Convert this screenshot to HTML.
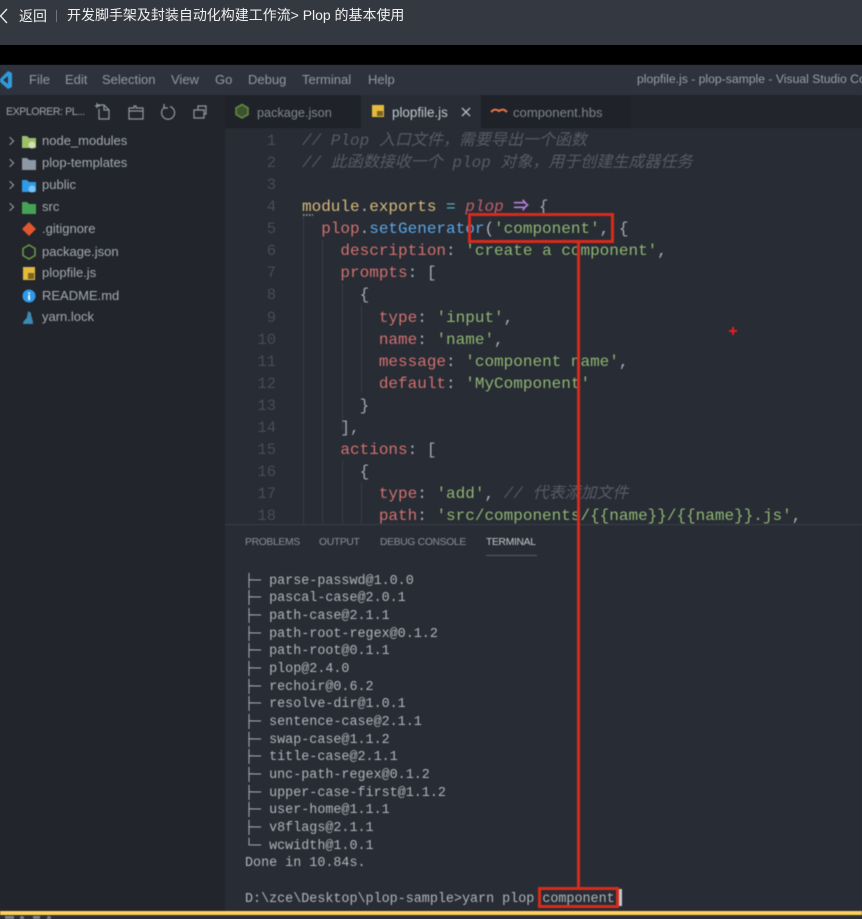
<!DOCTYPE html>
<html><head><meta charset="utf-8">
<style>
*{box-sizing:border-box}
html,body{margin:0;padding:0}
body{width:862px;height:919px;overflow:hidden;position:relative;background:#282c34;font-family:"Liberation Sans","Noto Sans CJK SC",sans-serif}
.a{position:absolute}
.t{position:absolute;white-space:pre;line-height:18px}
.m{color:#9299a3;font-size:13px;top:71px}
.f{color:#a4a9b1;font-size:13px;left:42px}
.ar{position:absolute;left:7px;width:6px;height:6px;border-top:1.3px solid #9aa0a8;border-right:1.3px solid #9aa0a8;transform:rotate(45deg)}
.code{position:absolute;font-family:"Liberation Mono","Noto Sans CJK SC",monospace;font-size:16px;white-space:pre;color:#abb2bf}
.ln{position:absolute;left:240px;width:36px;text-align:right;font-family:"Liberation Mono",monospace;font-size:15.5px;color:#484d58;white-space:pre}
.r{color:#d0716f}.g{color:#8fb573}.y{color:#d7ba7d}.b{color:#5aa7e6}.c{color:#565c67;font-style:italic}.p{color:#abb2bf}.w{color:#a3aab5}
.term{position:absolute;left:245px;top:572.5px;font-family:"Liberation Mono","DejaVu Sans Mono",monospace;font-size:13.4px;line-height:17.67px;white-space:pre;color:#b0b4ba}
.ig{position:absolute;width:1px;background:#383d47}
.tab{color:#8b9099;font-size:10.3px;top:534px;letter-spacing:-.3px}
#v{position:absolute;left:0;top:0;width:862px;height:919px;filter:blur(.4px)}
</style></head><body>
<div class="a" style="left:0;top:0;width:862px;height:45px;background:#343840"></div>
<div class="a" style="left:0;top:45px;width:862px;height:20px;background:#000"></div>
<svg class="a" style="left:0;top:7px" width="10" height="18"><path d="M7 2 L0.500 9 L7 16" fill="none" stroke="#e8e8e8" stroke-width="1.400"/></svg>
<div class="t" style="left:19px;top:7px;color:#f0f0f0;font-size:14px">返回</div>
<div class="a" style="left:56px;top:10px;width:1px;height:12px;background:#70747b"></div>
<div class="t" style="left:67px;top:6px;color:#f0f0f0;font-size:14px;letter-spacing:-.02px">开发脚手架及封装自动化构建工作流&gt; Plop 的基本使用</div>

<div id="v">
<!-- title bar -->
<div class="a" style="left:0;top:65px;width:862px;height:30px;background:#2e323c"></div>
<svg class="a" style="left:0;top:70px" width="14" height="20"><path d="M8 1 L12 3 V17 L8 19 L0 12 V9 Z M8 6 L3 10 L8 14 Z" fill="#2f9bdc" fill-rule="evenodd"/></svg>
<div class="t m" style="left:29px">File</div><div class="t m" style="left:65px">Edit</div><div class="t m" style="left:102px">Selection</div><div class="t m" style="left:171px">View</div><div class="t m" style="left:215px">Go</div><div class="t m" style="left:248px">Debug</div><div class="t m" style="left:302px">Terminal</div><div class="t m" style="left:368px">Help</div>
<div class="t" style="left:637px;top:70px;color:#9a9fa8;font-size:12.2px">plopfile.js - plop-sample - Visual Studio Code</div>

<!-- sidebar -->
<div class="a" style="left:0;top:95px;width:225px;height:816px;background:#22252b"></div>
<div class="t" style="left:6px;top:103px;color:#a0a4ab;font-size:10.6px;letter-spacing:-.45px">EXPLORER: PL...</div>
<svg class="a" style="left:94px;top:102px" width="120" height="20" fill="none" stroke="#9297a0" stroke-width="1.200"><path d="M3 3H10L15 8V17H5V7M1 4H6M3 1V6M10 3V8H15"/><path d="M35 6H40V4H42V6H49V17H35Z M35 9H49"/><path d="M76 4.500A6.500 6.500 0 1 1 71 5M70 2V6H74"/><path d="M100 8H110V16H100Z M104 8V4H112V12H110"/></svg>
<div class="ar" style="top:138px"></div><div class="ar" style="top:160px"></div><div class="ar" style="top:182px"></div><div class="ar" style="top:204px"></div>
<svg class="a" style="left:20px;top:130px" width="20" height="200">
<path d="M2 6H7L9 8H16V18H2Z" fill="#9dbf6a"/><circle cx="12" cy="15" r="3.500" fill="#d0e0b0"/>
<path d="M2 28H7L9 30H16V40H2Z" fill="#8d98a6"/>
<path d="M2 50H7L9 52H16V62H2Z" fill="#2f9be8"/><circle cx="12" cy="59" r="3.500" fill="#7cc4f5"/>
<path d="M2 72H7L9 74H16V84H2Z" fill="#45a257"/>
<path d="M9 92L16 99L9 106L2 99Z" fill="#e0562f"/>
<path d="M9 115L15 118.500V125.500L9 129L3 125.500V118.500Z" fill="none" stroke="#6b9a4a" stroke-width="1.500"/>
<rect x="3" y="137" width="12" height="13" fill="#e4b93d"/><rect x="8" y="143" width="6" height="6" fill="#7a6420"/>
<circle cx="9" cy="166" r="6.500" fill="#2f9be8"/><rect x="8.200" y="165" width="1.800" height="5" fill="#fff"/><rect x="8.200" y="162.500" width="1.800" height="1.500" fill="#fff"/>
<path d="M3 194C3 190 6 190 7 187L8 181L11 183C11 187 13 189 13 194H3Z" fill="#3a8bb5"/>
</svg>
<div class="t f" style="top:132px">node_modules</div><div class="t f" style="top:154px">plop-templates</div><div class="t f" style="top:176px">public</div><div class="t f" style="top:198px">src</div><div class="t f" style="top:220px">.gitignore</div><div class="t f" style="top:243px">package.json</div><div class="t f" style="top:264px">plopfile.js</div><div class="t f" style="top:287px">README.md</div><div class="t f" style="top:308px">yarn.lock</div>

<!-- tabs -->
<div class="a" style="left:225px;top:95px;width:637px;height:33px;background:#22252b"></div>
<div class="a" style="left:225px;top:95px;width:136px;height:33px;background:#1f2228"></div>
<div class="a" style="left:361px;top:95px;width:120px;height:33px;background:#282c34"></div>
<div class="a" style="left:481px;top:95px;width:150px;height:33px;background:#1f2228"></div>
<svg class="a" style="left:234px;top:103px" width="16" height="16"><path d="M8 1.500L14 5V11.500L8 15L2 11.500V5Z" fill="#3d5330" stroke="#5f8a45" stroke-width="1.600"/></svg>
<div class="t" style="left:257px;top:104px;color:#81868f;font-size:12.700px">package.json</div>
<div class="a" style="left:372px;top:105px;width:12px;height:12px;background:#e4b93d"></div><div class="a" style="left:377px;top:111px;width:6px;height:5px;background:#7a6420"></div>
<div class="t" style="left:392px;top:104px;color:#c3c7cd;font-size:13.400px">plopfile.js</div>
<svg class="a" style="left:461px;top:107px" width="10" height="10"><path d="M1 1L9 9M9 1L1 9" stroke="#b8bcc2" stroke-width="1.300"/></svg>
<svg class="a" style="left:490px;top:107px" width="18" height="9"><path d="M1 5C4 2 6 2 9 4C12 2 14 2 17 5" fill="none" stroke="#e8764a" stroke-width="2"/></svg>
<div class="t" style="left:513px;top:104px;color:#7f848d;font-size:13.100px">component.hbs</div>

<!-- line numbers -->
<div class="ln" style="top:130px;line-height:22.06px">1
2
3
4
5
6
7
8
9
10
11
12
13
14
15
16
17
18</div>
<div class="ig" style="left:303px;top:216px;height:308px"></div>
<div class="ig" style="left:322px;top:240px;height:284px"></div>
<div class="ig" style="left:342px;top:283px;height:147px"></div>
<div class="ig" style="left:361px;top:305px;height:88px"></div>
<div class="ig" style="left:342px;top:460px;height:64px"></div>
<div class="ig" style="left:361px;top:482px;height:42px"></div>
<div class="a" style="left:303px;top:214px;width:10px;height:2px;background-image:linear-gradient(90deg,#8a8f98 50%,transparent 50%);background-size:3px 2px"></div>
<div class="code" style="left:302px;top:130px;line-height:22.06px"><span class="c">// Plop 入口文件，需要导出一个函数
// 此函数接收一个 plop 对象，用于创建生成器任务</span>

<span class="y">module</span><span class="p">.</span><span class="y">exports</span> <span style="color:#56b6c2">=</span> <span style="color:#c0606a;font-style:italic">plop</span> <span style="color:#b27fd6;font-weight:bold">⇒</span> <span class="w">{</span>
  <span class="r">plop</span><span class="p">.</span><span class="b">setGenerator</span><span class="p">(</span><span class="g">'component'</span><span class="p">,</span> <span class="w">{</span>
    <span class="r">description</span><span class="p">:</span> <span class="g">'create a component'</span><span class="p">,</span>
    <span class="r">prompts</span><span class="p">:</span> <span class="w">[</span>
      <span class="w">{</span>
        <span class="r">type</span><span class="p">:</span> <span class="g">'input'</span><span class="p">,</span>
        <span class="r">name</span><span class="p">:</span> <span class="g">'name'</span><span class="p">,</span>
        <span class="r">message</span><span class="p">:</span> <span class="g">'component name'</span><span class="p">,</span>
        <span class="r">default</span><span class="p">:</span> <span class="g">'MyComponent'</span>
      <span class="w">}</span>
    <span class="w">],</span>
    <span class="r">actions</span><span class="p">:</span> <span class="w">[</span>
      <span class="w">{</span>
        <span class="r">type</span><span class="p">:</span> <span class="g">'add'</span><span class="p">,</span> <span class="c">// 代表添加文件</span>
        <span class="r">path</span><span class="p">:</span> <span class="g">'src/components/{{name}}/{{name}}.js'</span><span class="p">,</span></div>

<!-- panel -->
<div class="a" style="left:225px;top:524px;width:637px;height:387px;background:#282c34;border-top:1px solid #3a3e47"></div>
<div class="t tab" style="left:245px">PROBLEMS</div>
<div class="t tab" style="left:319px">OUTPUT</div>
<div class="t tab" style="left:380px">DEBUG CONSOLE</div>
<div class="t tab" style="left:486px;color:#c5c8cd">TERMINAL</div>
<div class="a" style="left:486px;top:555px;width:51px;height:1px;background:#565b64"></div>
<div class="term">├─ parse-passwd@1.0.0
├─ pascal-case@2.0.1
├─ path-case@2.1.1
├─ path-root-regex@0.1.2
├─ path-root@0.1.1
├─ plop@2.4.0
├─ rechoir@0.6.2
├─ resolve-dir@1.0.1
├─ sentence-case@2.1.1
├─ swap-case@1.1.2
├─ title-case@2.1.1
├─ unc-path-regex@0.1.2
├─ upper-case-first@1.1.2
├─ user-home@1.1.1
├─ v8flags@2.1.1
└─ wcwidth@1.0.1
Done in 10.84s.

D:\zce\Desktop\plop-sample&gt;yarn plop component</div>
<div class="a" style="left:619px;top:889px;width:3px;height:17px;background:#c5c8cd"></div>

<!-- annotations -->
<div class="a" style="left:468px;top:213px;width:146px;height:30px;border:3px solid #d92b1c"></div>
<div class="a" style="left:577px;top:243px;width:3px;height:644px;background:#d92b1c"></div>
<div class="a" style="left:538px;top:887px;width:81px;height:21px;border:3px solid #d92b1c"></div>
<div class="a" style="left:732px;top:327px;width:2px;height:8px;background:#e02020"></div>
<div class="a" style="left:729px;top:330px;width:8px;height:2px;background:#e02020"></div>

<!-- status -->
<div class="a" style="left:0;top:911px;width:862px;height:4px;background:#ffd05c"></div>
<div class="a" style="left:0;top:915px;width:862px;height:4px;background:#2e3138"></div>
<div class="a" style="left:5px;top:916px;width:9px;height:3px;background:#7f848c"></div>
<div class="a" style="left:20px;top:916px;width:4px;height:3px;border-radius:2px 2px 0 0;background:#7f848c"></div>
<div class="a" style="left:33px;top:916px;width:7px;height:3px;background:#7f848c"></div>
<div class="a" style="left:47px;top:916px;width:4px;height:3px;border-radius:2px 2px 0 0;background:#7f848c"></div>
</div>
</body></html>
